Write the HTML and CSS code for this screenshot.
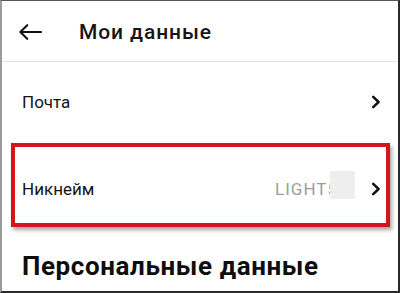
FILE: index.html
```html
<!DOCTYPE html>
<html lang="ru">
<head>
<meta charset="utf-8">
<title>Мои данные</title>
<link rel="stylesheet" href="styles.css">
</head>
<body>
<div class="frame">
  <header class="topbar">
    <span class="back">
      <svg width="24" height="16" viewBox="0 0 24 16"><path d="M23 8H2.5M9.2 1.2L2.4 8l6.8 6.8" fill="none" stroke="#111" stroke-width="2.1" stroke-linecap="round" stroke-linejoin="round"/></svg>
    </span>
    <h1 class="title">Мои данные</h1>
  </header>
  <div class="list">
    <div class="row">
      <span class="label">Почта</span>
      <span class="chev"><svg width="10" height="14" viewBox="0 0 10 14"><path d="M2.2 1.8L7.6 7l-5.4 5.2" fill="none" stroke="#111" stroke-width="2.5" stroke-linecap="round" stroke-linejoin="round"/></svg></span>
    </div>
    <div class="row row-marked">
      <span class="label">Никнейм</span>
      <span class="value">LIGHT5<span class="mask"></span></span>
      <span class="chev"><svg width="10" height="14" viewBox="0 0 10 14"><path d="M2.2 1.8L7.6 7l-5.4 5.2" fill="none" stroke="#111" stroke-width="2.5" stroke-linecap="round" stroke-linejoin="round"/></svg></span>
      <span class="highlight"></span>
    </div>
  </div>
  <h2 class="section">Персональные данные</h2>
</div>
</body>
</html>
```

FILE: styles.css
```css
html, body {
  margin: 0;
  padding: 0;
  background: #fff;
}
body {
  font-family: Roboto, "Noto Sans", "Liberation Sans", sans-serif;
  color: #141414;
}
.frame {
  width: 400px;
  height: 293px;
  box-sizing: border-box;
  border-top: 1px solid #555;
  border-left: 2px solid #9a9a9a;
  border-right: 2px solid #2a2a2a;
  border-bottom: 2px solid #2a2a2a;
  overflow: hidden;
  background: #fff;
}
.topbar {
  height: 61px;
  border-bottom: 1px solid #e2e2e2;
  display: flex;
  align-items: center;
  padding-left: 16px;
  padding-top: 1px;
  box-sizing: border-box;
}
.back {
  width: 24px;
  height: 16px;
  display: flex;
}
.title {
  margin: 0 0 0 37px;
  font-size: 21px;
  line-height: 26px;
  letter-spacing: 0.9px;
  font-weight: 500;
  color: #161616;
}
.list {
  display: flex;
  flex-direction: column;
  gap: 7px;
}
.row {
  position: relative;
  height: 80px;
  display: flex;
  align-items: center;
  padding: 0 17px 0 20px;
}
.label {
  font-size: 17px;
  line-height: 20px;
  flex: 1;
}
.value {
  position: relative;
  font-size: 17px;
  line-height: 20px;
  letter-spacing: 1px;
  color: #9c9c9c;
  margin-right: 16px;
  padding-right: 17px;
  display: flex;
  align-items: center;
}
.mask {
  position: absolute;
  right: 0;
  top: -8px;
  width: 25px;
  height: 28px;
  background: #eeeeee;
}
.chev {
  width: 10px;
  height: 14px;
  display: flex;
}
.highlight {
  position: absolute;
  left: 9px;
  right: 8px;
  top: -6px;
  bottom: 2px;
  border: 4px solid #d3151c;
  box-shadow: 2px 3px 4px rgba(0, 0, 0, 0.35);
  pointer-events: none;
}
.section {
  margin: 22px 0 0 20px;
  font-size: 26px;
  line-height: 30px;
  letter-spacing: 0.6px;
  font-weight: 700;
  color: #0e0e0e;
}
```
